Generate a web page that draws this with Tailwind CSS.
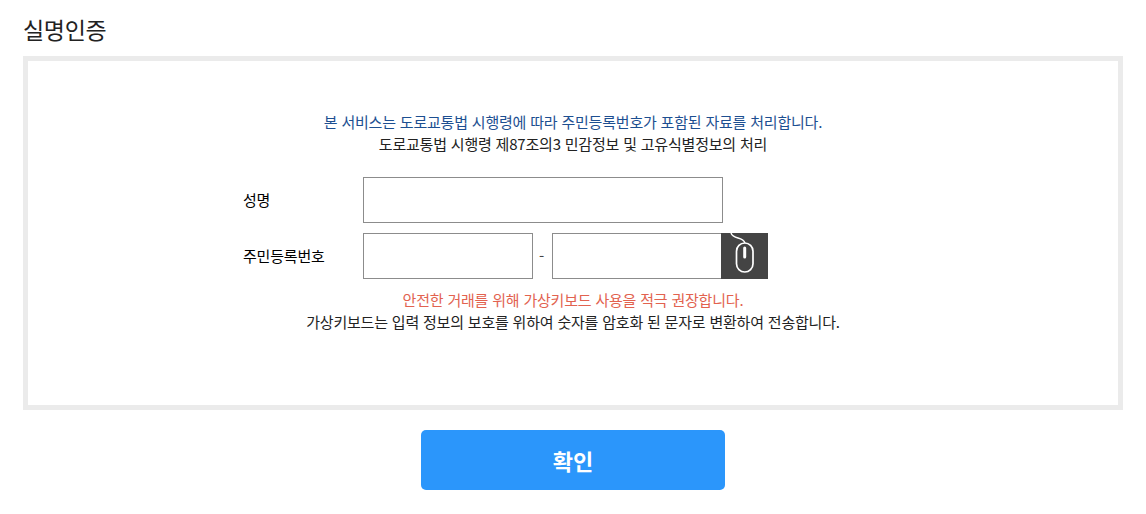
<!DOCTYPE html>
<html lang="ko">
<head>
  <meta charset="UTF-8" />
  <title>실명인증</title>
  <script src="https://cdn.jsdelivr.net/npm/@tailwindcss/browser@4"></script>
</head>
<body class="bg-white font-['Noto_Sans_CJK_KR','Noto_Sans',sans-serif] text-[#222]">
  <div class="w-[1146px] h-[514px] overflow-hidden px-[23px] pt-[13px]">
    <h2 class="text-[23px] leading-[33px] font-normal tracking-[-0.3px] mb-[10px]">실명인증</h2>

    <div class="w-[1100px] h-[354px] border-[5px] border-[#ebebeb] pt-[50px]">
      <div class="text-center text-[15px] leading-[22px] tracking-[-0.2px]">
        <p class="text-[#1d4f91]">본 서비스는 도로교통법 시행령에 따라 주민등록번호가 포함된 자료를 처리합니다.</p>
        <p>도로교통법 시행령 제87조의3 민감정보 및 고유식별정보의 처리</p>
      </div>

      <div class="mt-[22px] ml-[215px] flex flex-col gap-[10px] text-[15px] tracking-[-0.2px] text-black">
        <div class="flex items-center">
          <label class="w-[120px]">성명</label>
          <input type="text" class="w-[360px] h-[46px] border border-[#8c8c8c]" />
        </div>
        <div class="flex items-center">
          <label class="w-[120px]">주민등록번호</label>
          <input type="text" class="w-[170px] h-[46px] border border-[#8c8c8c]" />
          <span class="w-[19px] pr-[2px] text-center text-[#444]">-</span>
          <input type="text" class="w-[170px] h-[46px] border border-[#8c8c8c]" />
          <button class="w-[47px] h-[46px] bg-[#444] -ml-px">
            <svg viewBox="0 0 47 46" class="w-[47px] h-[46px]" fill="none" stroke="#fff">
              <path d="M10 0c1 3 3 4 7 5 4 1 6 2 7 5" stroke-width="1.4" />
              <rect x="15.5" y="10" width="16.5" height="29" rx="8.25" stroke-width="1.7" />
              <path d="M23.7 15v9" stroke-width="3" stroke-linecap="round" />
            </svg>
          </button>
        </div>
      </div>

      <div class="mt-[10px] text-center text-[15px] leading-[22px] tracking-[-0.2px]">
        <p class="text-[#e2624f]">안전한 거래를 위해 가상키보드 사용을 적극 권장합니다.</p>
        <p>가상키보드는 입력 정보의 보호를 위하여 숫자를 암호화 된 문자로 변환하여 전송합니다.</p>
      </div>
    </div>

    <div class="flex justify-center mt-[20px]">
      <button class="w-[304px] h-[60px] rounded-[5px] bg-[#2b96fb] text-white text-[22px] font-bold">확인</button>
    </div>
  </div>
</body>
</html>
